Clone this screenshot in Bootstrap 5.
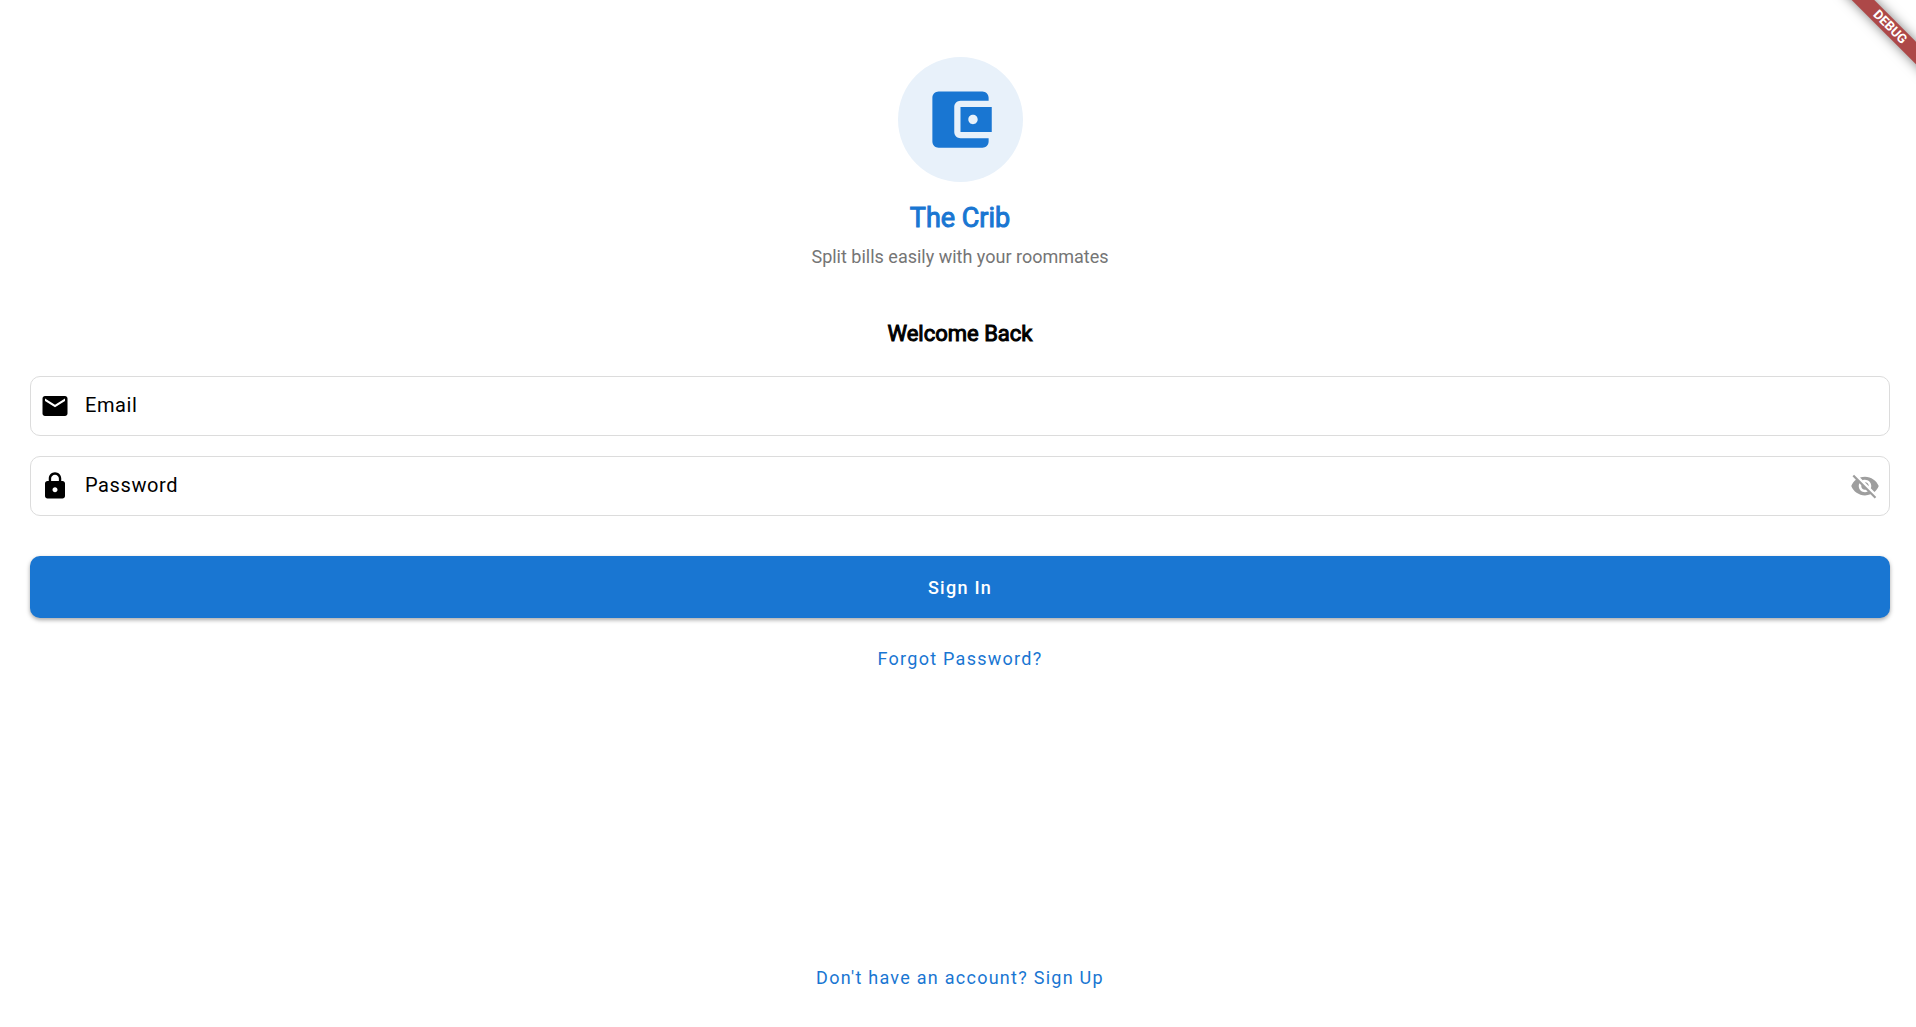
<!DOCTYPE html>
<html lang="en">
<head>
<meta charset="utf-8">
<meta name="viewport" content="width=device-width, initial-scale=1">
<title>The Crib</title>
<link href="https://cdn.jsdelivr.net/npm/bootstrap@5.3.0/dist/css/bootstrap.min.css" rel="stylesheet">
<style>
  :root { --brand: #1976d2; --tracking-label: .03em; --tracking-button: .07em; }
  body { font-family: Roboto, "Noto Sans", sans-serif; background: #fff; color: #000; }
  .page { padding: 57px 26px 36px 30px; }
  .logo { width: 125px; height: 125px; background: #e8f1fa; color: var(--brand); }
  .icon { width: 30px; height: 30px; flex: none; fill: currentColor; }
  .logo .icon { width: 75px; height: 75px; }
  .app-name { font-size: 27px; line-height: 36px; margin: 18px 0 10px; color: var(--brand); font-weight: 400; -webkit-text-stroke: 1px currentColor; }
  .tagline { font-size: 18px; line-height: 22px; margin: 0 0 50px; color: #757575; }
  .welcome { font-size: 22px; line-height: 32px; margin: 0 0 26px; font-weight: 400; -webkit-text-stroke: 1px currentColor; }
  .field { height: 60px; padding: 0 9px; border: 1px solid #dcdcdc; border-radius: 10px; font-size: 20px; }
  .field:focus-within { border-color: var(--brand); }
  .field + .field { margin-top: 20px; }
  .field label { padding: 0 0 2px 15px; letter-spacing: var(--tracking-label); }
  .field .form-control { font-size: 20px; background: transparent; }
  .eye { color: #9e9e9e; line-height: 0; }
  .sign-in { height: 62px; margin-top: 40px; border-radius: 10px; background: var(--brand); color: #fff; font-size: 18px; font-weight: 500; letter-spacing: var(--tracking-button); box-shadow: 0 2px 4px rgba(0,0,0,.35); }
  .sign-in:hover { background: #1565c0; color: #fff; }
  .text-link { font-size: 18px; line-height: 24px; color: var(--brand); letter-spacing: var(--tracking-button); }
  .forgot { margin-top: 29px; }
  .corner { width: 100px; height: 100px; pointer-events: none; }
  .ribbon { top: 19px; left: 14px; width: 120px; height: 16px; transform: rotate(45deg); background: #ad4848; color: #fff; font-size: 13px; line-height: 16px; font-weight: 700; box-shadow: 0 0 12px rgba(0,0,0,.5); }
</style>
<script src="https://cdn.jsdelivr.net/npm/bootstrap@5.3.0/dist/js/bootstrap.bundle.min.js" defer></script>
</head>
<body>
<main class="page min-vh-100 d-flex flex-column">
  <header class="d-flex flex-column align-items-center text-center">
    <div class="logo rounded-circle d-flex align-items-center justify-content-center">
      <svg class="icon" viewBox="0 0 24 24" aria-hidden="true"><path d="M21 18v1c0 1.100-.9 2-2 2H5c-1.110 0-2-.9-2-2V5c0-1.100.89-2 2-2h14c1.100 0 2 .9 2 2v1h-9c-1.110 0-2 .9-2 2v8c0 1.100.89 2 2 2h9zm-9-2h10V8H12v8zm4-2.500c-.83 0-1.500-.67-1.500-1.500s.67-1.500 1.500-1.500 1.500.67 1.500 1.500-.67 1.500-1.500 1.500z"/></svg>
    </div>
    <h1 class="app-name">The Crib</h1>
    <p class="tagline">Split bills easily with your roommates</p>
    <h2 class="welcome">Welcome Back</h2>
  </header>
  <form class="d-flex flex-column">
    <div class="field d-flex align-items-center">
      <svg class="icon" viewBox="0 0 24 24" aria-hidden="true"><path d="M20 4H4c-1.100 0-1.990.9-1.990 2L2 18c0 1.100.9 2 2 2h16c1.100 0 2-.9 2-2V6c0-1.100-.9-2-2-2zm0 4l-8 5-8-5V6l8 5 8-5v2z"/></svg>
      <label for="email">Email</label>
      <input id="email" type="email" class="form-control border-0 shadow-none" autocomplete="email">
    </div>
    <div class="field d-flex align-items-center">
      <svg class="icon" viewBox="0 0 24 24" aria-hidden="true"><path d="M18 8h-1V6c0-2.760-2.240-5-5-5S7 3.240 7 6v2H6c-1.100 0-2 .9-2 2v10c0 1.100.9 2 2 2h12c1.100 0 2-.9 2-2V10c0-1.100-.9-2-2-2zm-6 9c-1.100 0-2-.9-2-2s.9-2 2-2 2 .9 2 2-.9 2-2 2zm3.100-9H8.900V6c0-1.710 1.390-3.100 3.100-3.100 1.710 0 3.100 1.390 3.100 3.100v2z"/></svg>
      <label for="password">Password</label>
      <input id="password" type="password" class="form-control border-0 shadow-none" autocomplete="current-password">
      <button type="button" class="eye btn p-0 border-0" aria-label="Show password">
        <svg class="icon" viewBox="0 0 24 24" aria-hidden="true"><path d="M12 7c2.760 0 5 2.240 5 5 0 .65-.13 1.260-.36 1.830l2.920 2.920c1.510-1.260 2.700-2.890 3.430-4.750-1.730-4.390-6-7.500-11-7.500-1.400 0-2.740.25-3.980.7l2.160 2.160C10.740 7.130 11.350 7 12 7zM2 4.270l2.280 2.280.46.46C3.080 8.300 1.780 10.020 1 12c1.730 4.390 6 7.500 11 7.500 1.550 0 3.030-.3 4.380-.84l.42.42L19.730 22 21 20.730 3.270 3 2 4.270zM7.530 9.800l1.550 1.550c-.05.21-.08.43-.08.65 0 1.660 1.340 3 3 3 .22 0 .44-.03.65-.08l1.550 1.550c-.67.33-1.410.53-2.200.53-2.760 0-5-2.240-5-5 0-.79.2-1.530.53-2.200zm4.310-.78l3.150 3.150.02-.16c0-1.660-1.340-3-3-3l-.17.01z"/></svg>
      </button>
    </div>
    <button type="submit" class="sign-in btn border-0 w-100">Sign In</button>
    <a href="#" class="forgot text-link text-decoration-none align-self-center">Forgot Password?</a>
  </form>
  <footer class="mt-auto text-center">
    <a href="#" class="text-link text-decoration-none">Don't have an account? Sign Up</a>
  </footer>
</main>
<div class="corner position-absolute top-0 end-0 overflow-hidden">
  <div class="ribbon position-absolute text-center">DEBUG</div>
</div>
</body>
</html>
